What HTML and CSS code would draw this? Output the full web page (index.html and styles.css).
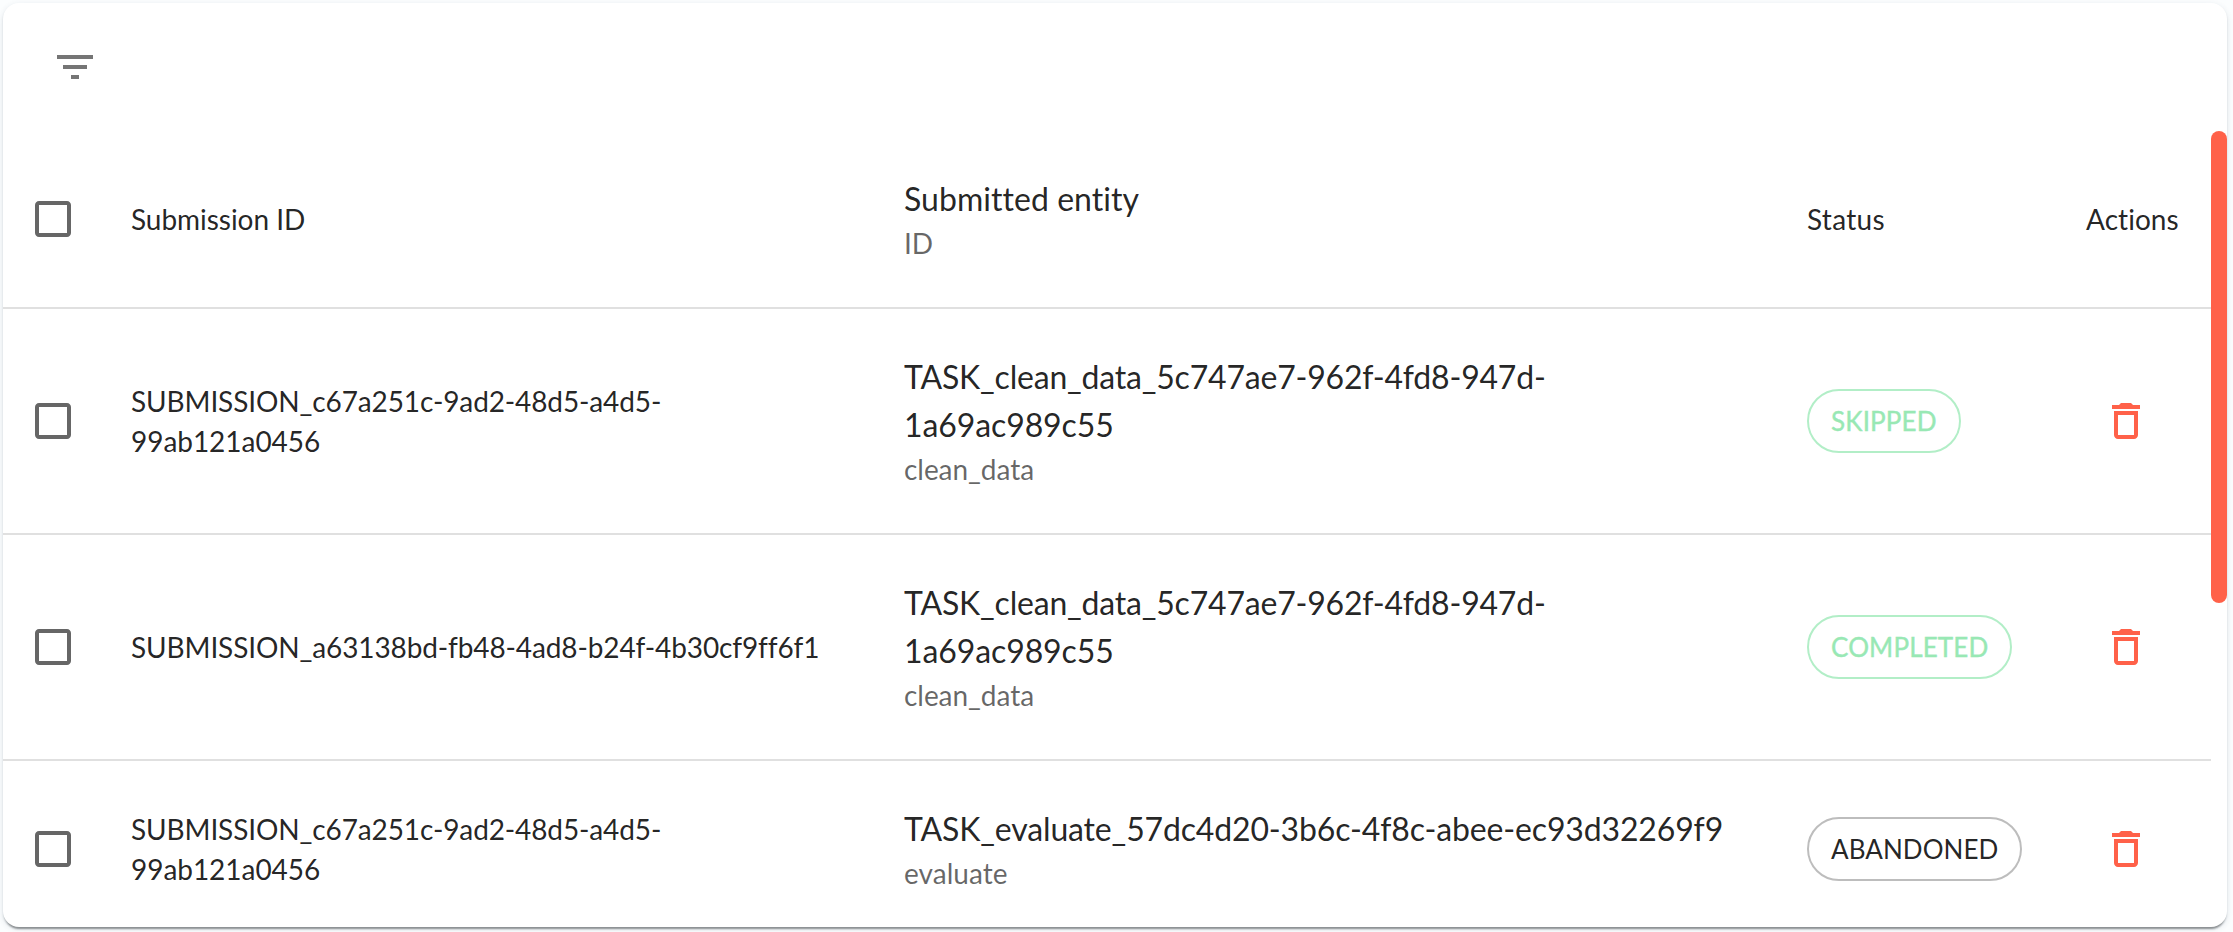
FILE: index.html
```html
<!DOCTYPE html>
<html lang="en">
<head>
<meta charset="utf-8">
<title>Submissions</title>
<link rel="stylesheet" href="styles.css">
</head>
<body>
<svg class="defs" aria-hidden="true">
  <symbol id="box" viewBox="0 0 24 24"><path d="M19 5v14H5V5h14m0-2H5c-1.100 0-2 .9-2 2v14c0 1.100.9 2 2 2h14c1.100 0 2-.9 2-2V5c0-1.100-.9-2-2-2z"/></symbol>
  <symbol id="trash" viewBox="0 0 24 24"><path d="M6 19c0 1.100.9 2 2 2h8c1.100 0 2-.9 2-2V7H6v12zM8 9h8v10H8V9zm7.500-5l-1-1h-5l-1 1H5v2h14V4h-3.500z"/></symbol>
</svg>
<main class="card">
  <div class="toolbar">
    <svg class="icon filter" viewBox="0 0 24 24"><path d="M10 18h4v-2h-4v2zM3 6v2h18V6H3zm3 7h12v-2H6v2z"/></svg>
  </div>
  <div class="scroller">
    <div class="table">
      <div class="row">
        <div class="check"><svg class="icon"><use href="#box"/></svg></div>
        <div class="cell snug">Submission ID</div>
        <div class="cell"><div class="entity heading">Submitted entity</div><div class="sub">ID</div></div>
        <div class="cell">Status</div>
        <div class="cell label">Actions</div>
      </div>
      <div class="row">
        <div class="check"><svg class="icon"><use href="#box"/></svg></div>
        <div class="cell id">SUBMISSION_c67a251c-9ad2-48d5-a4d5-<br><span class="snug">99ab121a0456</span></div>
        <div class="cell"><div class="entity">TASK_clean_data_5c747ae7-962f-4fd8-947d-<br><span class="tail">1a69ac989c55</span></div><div class="sub">clean_data</div></div>
        <div class="cell"><span class="chip green">SKIPPED</span></div>
        <div class="cell action"><svg class="icon"><use href="#trash"/></svg></div>
      </div>
      <div class="row">
        <div class="check"><svg class="icon"><use href="#box"/></svg></div>
        <div class="cell id">SUBMISSION_a63138bd-fb48-4ad8-b24f-4b30cf9ff6f1</div>
        <div class="cell"><div class="entity">TASK_clean_data_5c747ae7-962f-4fd8-947d-<br><span class="tail">1a69ac989c55</span></div><div class="sub">clean_data</div></div>
        <div class="cell"><span class="chip green">COMPLETED</span></div>
        <div class="cell action"><svg class="icon"><use href="#trash"/></svg></div>
      </div>
      <div class="row">
        <div class="check"><svg class="icon"><use href="#box"/></svg></div>
        <div class="cell id">SUBMISSION_c67a251c-9ad2-48d5-a4d5-<br><span class="snug">99ab121a0456</span></div>
        <div class="cell"><div class="entity single">TASK_evaluate_57dc4d20-3b6c-4f8c-abee-ec93d32269f9</div><div class="sub wide">evaluate</div></div>
        <div class="cell"><span class="chip">ABANDONED</span></div>
        <div class="cell action"><svg class="icon"><use href="#trash"/></svg></div>
      </div>
    </div>
    <div class="thumb"></div>
  </div>
</main>
</body>
</html>
```

FILE: styles.css
```css
* { box-sizing: border-box; }
body {
  margin: 0;
  height: 932px;
  padding: 3px 6px 5px 3px;
  overflow: hidden;
  background: #fbfdfe;
  font-family: Lato, sans-serif;
  color: rgba(0, 0, 0, .87);
}
.defs { display: none; }
.card {
  height: 924px;
  overflow: hidden;
  border-radius: 16px;
  background: #fff;
  box-shadow: 0 4px 2px -2px rgba(0, 0, 0, .32), 0 2px 2px rgba(30, 50, 60, .14), 0 2px 6px rgba(30, 60, 80, .12);
}
.toolbar { height: 128px; padding: 40px 48px; }
.icon { display: block; width: 48px; height: 48px; fill: currentColor; }
.filter { color: rgba(0, 0, 0, .54); }
.scroller { display: flex; align-items: flex-start; }
.table { width: 2208px; }
.row {
  display: grid;
  grid-template-columns: 96px 773px 903px 279px 157px;
  align-items: center;
  border-bottom: 2px solid #e0e0e0;
  padding: 32px 0;
}
.check { padding-left: 26px; color: rgba(0, 0, 0, .6); }
.cell {
  padding-left: 32px;
  font-size: 28px;
  line-height: 40px;
  letter-spacing: .3px;
  font-variant-ligatures: none;
  white-space: nowrap;
}
.label { letter-spacing: .05px; }
.id { letter-spacing: -.12px; }
.snug { letter-spacing: -.04px; }
.entity { margin-top: 12px; font-size: 32px; line-height: 48px; letter-spacing: -.2px; }
.heading { letter-spacing: .05px; }
.tail { letter-spacing: -.1px; }
.single { letter-spacing: -.15px; }
.sub { margin-bottom: 12px; color: rgba(0, 0, 0, .6); letter-spacing: -.05px; }
.wide { letter-spacing: .05px; }
.chip {
  display: flex;
  align-items: center;
  width: max-content;
  height: 64px;
  padding: 0 22px;
  border: 2px solid #bdbdbd;
  border-radius: 32px;
  font-size: 26px;
  letter-spacing: .05px;
}
.green { color: #98e8b4; border-color: #b2eec7; letter-spacing: .15px; -webkit-text-stroke: .4px currentColor; }
.action { padding-left: 48px; color: #ff6149; }
.thumb { width: 16px; height: 472px; border-radius: 8px; background: #ff6149; }
```
